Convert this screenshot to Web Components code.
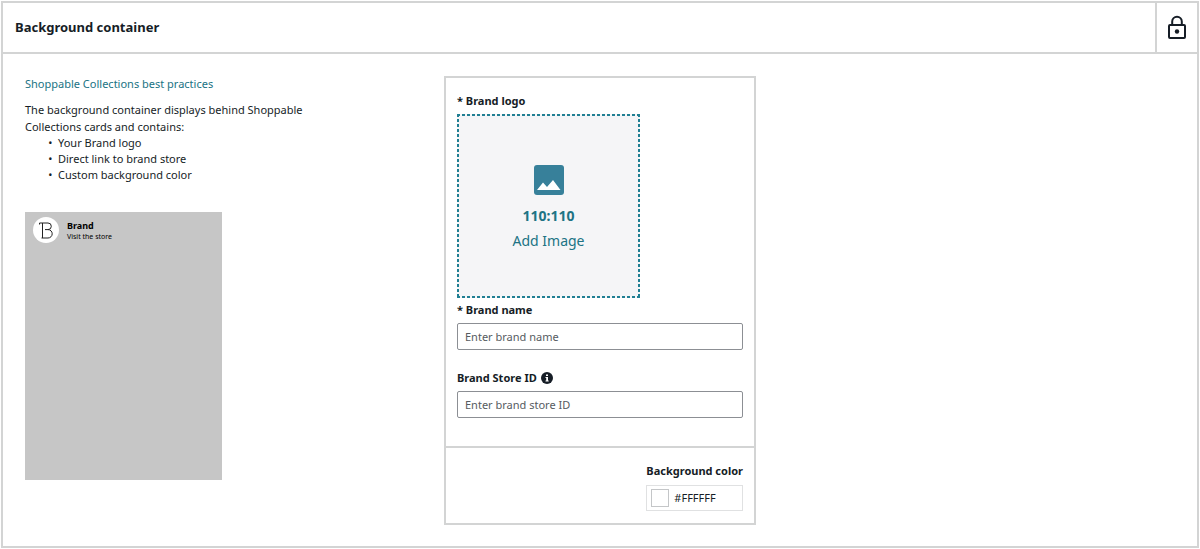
<!DOCTYPE html>
<html lang="en">
<head>
<meta charset="utf-8">
<title>Background container</title>
<style>
    body {
        margin: 0;
        padding: 1px;
        background: #fff;
        color: #161d26;
        font: 11px/16px "Noto Sans", sans-serif;
        --line-color: #d3d4d4;
        --link-color: #207384;
    }
</style>
</head>
<body>
<module-panel heading="Background container">
    <module-help slot="help"></module-help>
    <module-form slot="form"></module-form>
</module-panel>

<template id="module-panel">
<style>
    :host { display: block; border: 2px solid var(--line-color); }
    header { display: flex; align-items: stretch; height: 49px; border-bottom: 2px solid var(--line-color); }
    h2 { flex: 1; margin: 0; padding-left: 12px; font-size: 13px; line-height: 49px; }
    button { width: 42px; padding: 0; border: 0; border-left: 2px solid var(--line-color); background: none; color: inherit; }
    svg { display: block; margin: 0 auto; }
    .content {
        display: grid;
        grid-template-columns: 419px 312px 1fr;
        align-items: start;
        padding: 22px 22px 21px;
    }
</style>
<header>
    <h2></h2>
    <button type="button" aria-label="Locked module">
        <svg width="20" height="26" viewBox="0 0 20 26" fill="none" stroke="#161d26" stroke-width="2">
            <path d="M5.200 10V6.500a4.800 4.800 0 0 1 9.600 0V10"/>
            <rect x="2" y="10" width="16" height="13" rx="1"/>
            <circle cx="10" cy="16.500" r="2.200" fill="#161d26" stroke="none"/>
        </svg>
    </button>
</header>
<div class="content">
    <slot name="help"></slot>
    <slot name="form"></slot>
</div>
</template>

<template id="module-help">
<style>
    :host { display: block; }
    a { display: block; color: var(--link-color); text-decoration: none; }
    p { max-width: 320px; margin: 9px 0 0; line-height: 17px; }
    ul { margin: 0 0 29px; padding-left: 33px; list-style-type: "•\00a0\00a0"; }
    brand-preview { width: 197px; }
</style>
<a href="#">Shoppable Collections best practices</a>
<p>The background container displays behind Shoppable Collections cards and contains:</p>
<ul>
    <li>Your Brand logo</li>
    <li>Direct link to brand store</li>
    <li>Custom background color</li>
</ul>
<brand-preview>Brand<span slot="link">Visit the store</span></brand-preview>
</template>

<template id="brand-preview">
<style>
    :host { display: flex; gap: 8px; box-sizing: border-box; height: 268px; padding: 5px 8px; background: #c6c6c6; color: #000; }
    svg { flex: none; }
    .text { display: flex; flex-direction: column; padding-top: 3px; font-size: 9px; line-height: 11px; }
    small { font-size: 7px; }
</style>
<svg width="26" height="26" viewBox="0 0 26 26" fill="none" stroke="#222">
    <circle cx="13" cy="13" r="13" fill="#fff" stroke="none"/>
    <path d="M6.500 7.500V6H15a3.300 3.300 0 0 1 0 6.600H12M15 12.600a4.200 4.200 0 0 1 0 8.400H8.500M9.500 6V21"/>
</svg>
<div class="text">
    <strong><slot></slot></strong>
    <small><slot name="link"></slot></small>
</div>
</template>

<template id="module-form">
<style>
    :host { display: block; border: 2px solid var(--line-color); }
    .fields { padding: 15px 11px 28px; }
    image-picker { margin-bottom: 4px; }
    text-field + text-field { margin-top: 20px; }
    footer { display: flex; justify-content: flex-end; padding: 15px 11px 12px; border-top: 2px solid var(--line-color); }
</style>
<div class="fields">
    <image-picker ratio="110:110">* Brand logo</image-picker>
    <text-field placeholder="Enter brand name">* Brand name</text-field>
    <text-field placeholder="Enter brand store ID" info>Brand Store ID</text-field>
</div>
<footer>
    <color-field value="#FFFFFF">Background color</color-field>
</footer>
</template>

<template id="image-picker">
<style>
    :host { display: block; }
    label { display: block; margin-bottom: 5px; font-weight: bold; }
    /* the dashes are drawn as gradients, a dashed border leaves them too long */
    button {
        --dash: #207f93 0 3px, transparent 3px 5px;
        display: flex;
        flex-direction: column;
        align-items: center;
        justify-content: center;
        box-sizing: border-box;
        width: 183px;
        height: 184px;
        padding: 6px 0 0;
        border: 0;
        background:
            repeating-linear-gradient(90deg, var(--dash)) top / 100% 2px no-repeat,
            repeating-linear-gradient(90deg, var(--dash)) bottom / 100% 2px no-repeat,
            repeating-linear-gradient(180deg, var(--dash)) left / 2px 100% no-repeat,
            repeating-linear-gradient(180deg, var(--dash)) right / 2px 100% no-repeat,
            #f5f5f7;
        color: var(--link-color);
        font: inherit;
        font-size: 14px;
        line-height: 25px;
    }
    svg { margin-bottom: 8px; }
</style>
<label for="picker"><slot></slot></label>
<button type="button" id="picker">
    <svg width="30" height="30" viewBox="0 0 30 30">
        <rect width="30" height="30" rx="3" fill="#37809a"/>
        <path d="M3 25 9 17.500 13 22 19 15 26.500 25Z" fill="#fff"/>
    </svg>
    <strong></strong>
    <span>Add Image</span>
</button>
</template>

<template id="text-field">
<style>
    :host { display: block; }
    .label { display: flex; align-items: center; gap: 4px; margin-bottom: 5px; font-weight: bold; }
    svg { display: none; }
    :host([info]) svg { display: block; }
    input {
        display: block;
        box-sizing: border-box;
        width: 100%;
        height: 27px;
        padding: 0 7px;
        border: 1px solid #8c8f94;
        border-radius: 2px;
        background: #fff;
        color: inherit;
        font: inherit;
    }
    input::placeholder { color: #565b61; opacity: 1; }
</style>
<div class="label">
    <label for="field"><slot></slot></label>
    <svg width="12" height="12" viewBox="0 0 12 12">
        <circle cx="6" cy="6" r="6" fill="#161d26"/>
        <path d="M5 2.500h2v1.500H5ZM4.500 5H7v3.500h.7v1H4.500v-1h.7V6h-.7Z" fill="#fff"/>
    </svg>
</div>
<input type="text" id="field">
</template>

<template id="color-field">
<style>
    :host { display: block; }
    label { display: block; margin-bottom: 6px; font-weight: bold; }
    .box { display: flex; align-items: center; gap: 5px; box-sizing: border-box; height: 26px; padding: 0 4px; border: 1px solid #e0e1e2; }
    input { box-sizing: border-box; padding: 0; border: 0; background: none; color: inherit; }
    [type="color"] { appearance: none; flex: none; width: 18px; height: 18px; border: 1px solid #c4c6c8; }
    [type="color"]::-webkit-color-swatch-wrapper { padding: 0; }
    [type="color"]::-webkit-color-swatch { border: 0; }
    [type="text"] { flex: 1; width: 0; min-width: 0; font: inherit; }
</style>
<label for="hex"><slot></slot></label>
<div class="box">
    <input type="color" aria-label="Pick a color">
    <input type="text" id="hex">
</div>
</template>

<script>
class TemplateElement extends HTMLElement {
    constructor() {
        super();
        this.attachShadow({ mode: "open" });
    }

    connectedCallback() {
        const template = document.getElementById(this.localName);
        this.shadowRoot.replaceChildren(template.content.cloneNode(true));
        this.render(this.shadowRoot);
    }

    render() {}
}

class ModulePanel extends TemplateElement {
    render(root) {
        root.querySelector('h2').textContent = this.getAttribute('heading');
    }
}

class ModuleHelp extends TemplateElement {}

class BrandPreview extends TemplateElement {}

class ModuleForm extends TemplateElement {}

class ImagePicker extends TemplateElement {
    render(root) {
        root.querySelector('strong').textContent = this.getAttribute('ratio');
    }
}

class TextField extends TemplateElement {
    render(root) {
        root.querySelector('input').placeholder = this.getAttribute('placeholder');
    }
}

class ColorField extends TemplateElement {
    render(root) {
        const swatch = root.querySelector('[type="color"]');
        const hex = root.querySelector('[type="text"]');
        hex.value = this.getAttribute('value');
        swatch.value = hex.value.toLowerCase();
        swatch.addEventListener('input', () => {
            hex.value = swatch.value.toUpperCase();
        });
        hex.addEventListener('change', () => {
            swatch.value = hex.value.toLowerCase();
        });
    }
}

customElements.define('module-panel', ModulePanel);
customElements.define('module-help', ModuleHelp);
customElements.define('brand-preview', BrandPreview);
customElements.define('module-form', ModuleForm);
customElements.define('image-picker', ImagePicker);
customElements.define('text-field', TextField);
customElements.define('color-field', ColorField);
</script>
</body>
</html>
